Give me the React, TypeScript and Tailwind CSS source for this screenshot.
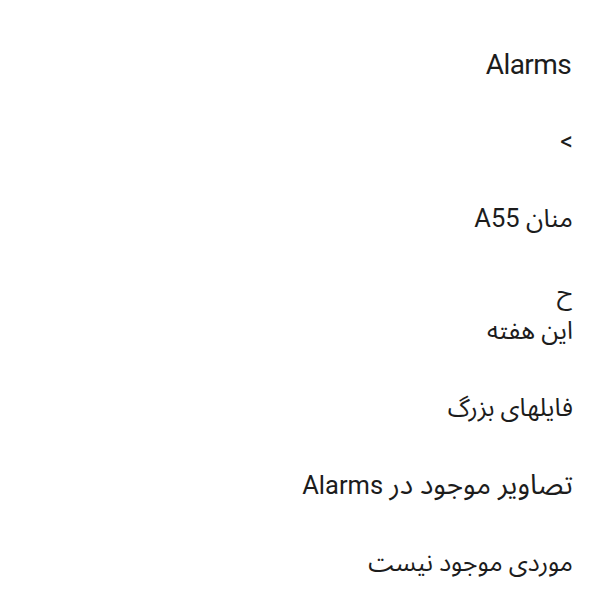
export default function App() {
  return (
    <div
      dir="rtl"
      className="w-[600px] h-[600px] bg-white text-[#1c1c1c] pr-[27px] pt-[47px] flex flex-col gap-[42px] text-[25px] leading-[35px]"
      style={{ fontFamily: 'Roboto, "Noto Sans Arabic", "DejaVu Sans", sans-serif' }}
    >
      <h1 className="text-[28px] leading-[35px] font-normal tracking-[-0.6px] mr-[2px]">Alarms</h1>
      <div>&gt;</div>
      <div className="text-[25.5px]">منان A55</div>
      <div className="flex flex-col">
        <span className="leading-[29px]">ح</span>
        <span className="mt-[6px]">این هفته</span>
      </div>
      <div>فایلهای بزرگ</div>
      <div className="text-[25.5px]">
        <span className="text-[28px]">تصاویر موجود در</span> Alarms
      </div>
      <div>موردی موجود نیست</div>
    </div>
  );
}
